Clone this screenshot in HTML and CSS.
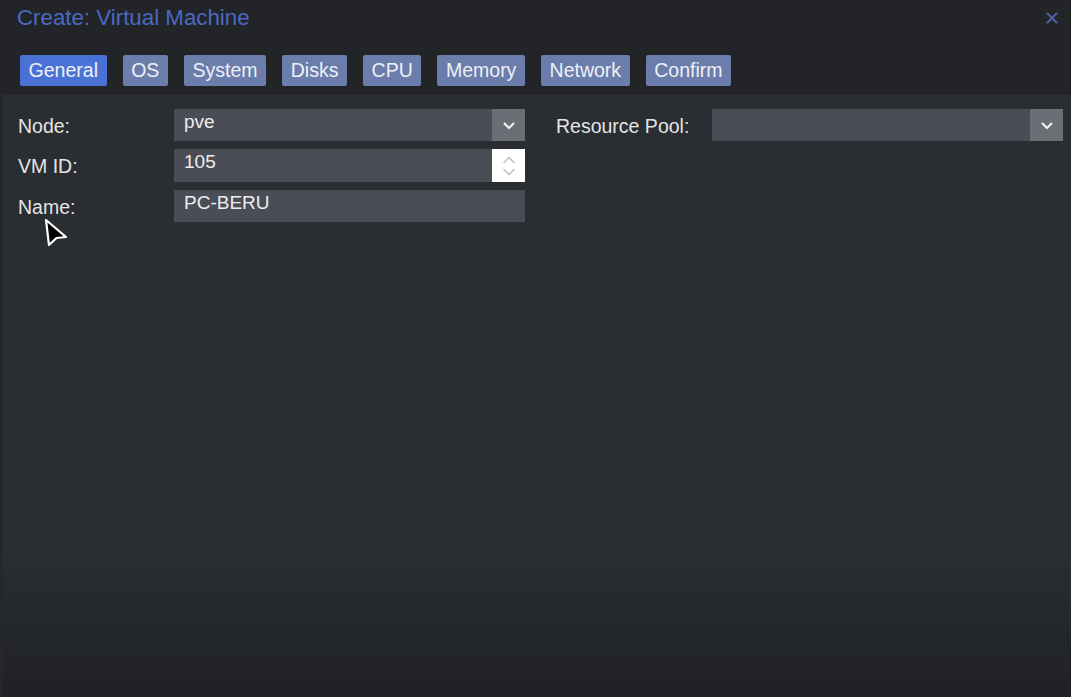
FILE: index.html
```html
<!DOCTYPE html>
<html>
<head>
<meta charset="utf-8">
<link rel="stylesheet" href="styles.css">
</head>
<body>
<div class="window">
  <div class="header">
    <div class="title-row">
      <span class="title">Create: Virtual Machine</span>
      <svg class="close" width="12" height="12" viewBox="0 0 12 12"><path d="M1.5 1.5 L10.5 10.5 M10.5 1.5 L1.5 10.5" stroke="#4f60a0" stroke-width="2.2" stroke-linecap="round"/></svg>
    </div>
    <div class="tabs">
      <span class="tab active">General</span>
      <span class="tab">OS</span>
      <span class="tab">System</span>
      <span class="tab">Disks</span>
      <span class="tab">CPU</span>
      <span class="tab">Memory</span>
      <span class="tab">Network</span>
      <span class="tab">Confirm</span>
    </div>
  </div>
  <div class="panel">
    <div class="columns">
      <div class="column">
        <div class="row">
          <label class="label">Node:</label>
          <div class="field">
            <span class="value">pve</span>
            <span class="trigger">
              <svg width="14" height="9" viewBox="0 0 14 9"><path d="M2 2 L7 7 L12 2" fill="none" stroke="#f2f2f2" stroke-width="2.2"/></svg>
            </span>
          </div>
        </div>
        <div class="row tall">
          <label class="label">VM ID:</label>
          <div class="field">
            <span class="value">105</span>
            <span class="spinner">
              <svg width="16" height="28" viewBox="0 0 16 28"><path d="M2.5 11 L8 5.5 L13.5 11" fill="none" stroke="#c4c4c4" stroke-width="1.6"/><path d="M2.5 17 L8 22.5 L13.5 17" fill="none" stroke="#c4c4c4" stroke-width="1.6"/></svg>
            </span>
          </div>
        </div>
        <div class="row">
          <label class="label">Name:</label>
          <div class="field">
            <span class="value">PC-BERU</span>
          </div>
        </div>
      </div>
      <div class="column">
        <div class="row">
          <label class="label">Resource Pool:</label>
          <div class="field">
            <span class="value"></span>
            <span class="trigger">
              <svg width="14" height="9" viewBox="0 0 14 9"><path d="M2 2 L7 7 L12 2" fill="none" stroke="#f2f2f2" stroke-width="2.2"/></svg>
            </span>
          </div>
        </div>
      </div>
    </div>
    <svg class="cursor" width="32" height="36" viewBox="0 0 32 36"><path d="M6 6 L26 23 L16.5 24 L9 31 Z" fill="#000" stroke="#fff" stroke-width="2.2" stroke-linejoin="round"/></svg>
  </div>
</div>
</body>
</html>
```

FILE: styles.css
```css
html, body {
  margin: 0;
  padding: 0;
  height: 100%;
}
body {
  background: #222428;
  font-family: "Liberation Sans", Arial, sans-serif;
  overflow: hidden;
}
.window {
  display: flex;
  flex-direction: column;
  height: 697px;
}
.header {
  background: #222428;
  height: 95px;
  flex: none;
}
.title-row {
  display: flex;
  justify-content: space-between;
  align-items: flex-start;
  padding: 5px 13px 0 17px;
  height: 55px;
  box-sizing: border-box;
}
.title {
  color: #4a69c2;
  font-size: 22.3px;
  line-height: 26px;
}
.close {
  margin-top: 7px;
}
.tabs {
  display: flex;
  gap: 16px;
  padding-left: 20px;
}
.tab {
  background: #6b7dab;
  color: #eef0f6;
  font-size: 19.5px;
  line-height: 31px;
  height: 31px;
  padding: 0 8.6px;
  border-radius: 2px;
}
.tab.active {
  background: #4a72d6;
}
.panel {
  flex: 1;
  position: relative;
  background: linear-gradient(to bottom, #2a2d32 0%, #2a2d32 76%, #1f2125 100%);
  border-left: 3px solid #25272b;
  padding: 14px 9px 0 15px;
}
.columns {
  display: flex;
  gap: 31px;
}
.column {
  display: flex;
  flex-direction: column;
  gap: 8px;
}
.row {
  display: flex;
  align-items: flex-start;
  height: 32px;
}
.row.tall {
  height: 33px;
}
.label {
  width: 156px;
  color: #e4e4e4;
  font-size: 19.5px;
  line-height: 24px;
  padding-top: 5px;
}
.field {
  width: 351px;
  height: 100%;
  background: #4a4d55;
  display: flex;
  justify-content: space-between;
}
.value {
  color: #eeeeee;
  font-size: 19px;
  padding: 2px 0 0 10px;
  line-height: 22px;
}
.trigger {
  width: 33px;
  background: #6b6e75;
  display: flex;
  align-items: center;
  justify-content: center;
}
.spinner {
  width: 33px;
  background: #ffffff;
  display: flex;
  align-items: center;
  justify-content: center;
}
.cursor {
  position: absolute;
  left: 37px;
  top: 119px;
}
```
